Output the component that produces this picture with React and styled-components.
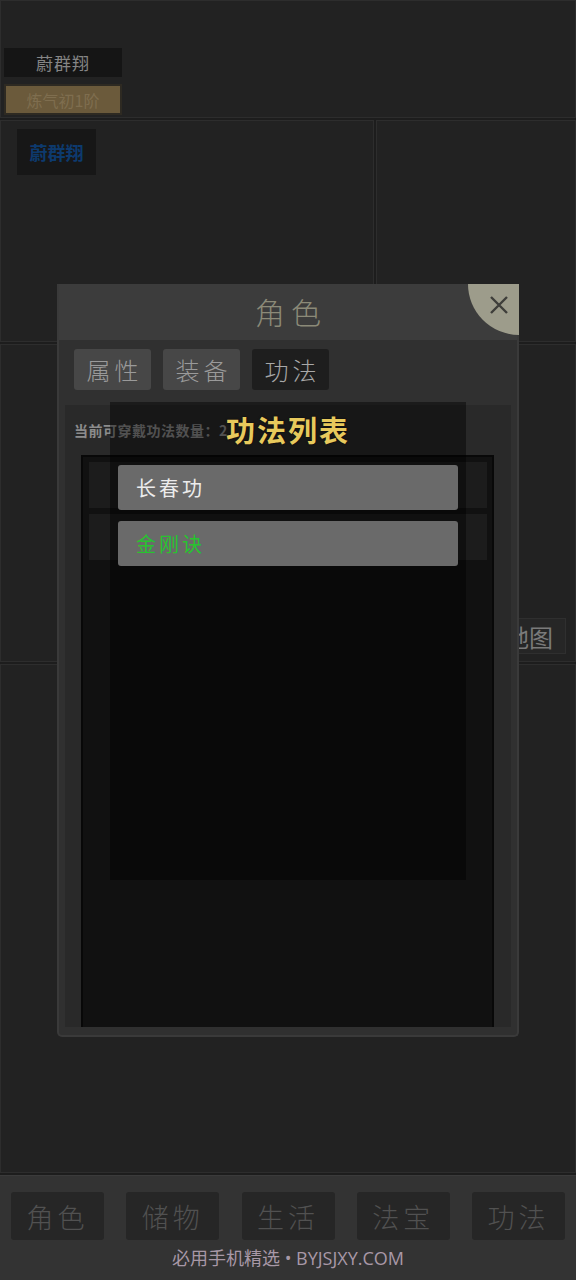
import React from 'react';
import styled, { createGlobalStyle } from 'styled-components';

const GlobalStyle = createGlobalStyle`
  html, body {
    margin: 0;
    padding: 0;
    background: #1d1d1d;
  }
  body {
    font-family: "Noto Sans CJK SC", "Noto Sans", sans-serif;
  }
  * {
    box-sizing: border-box;
  }
`;

const tabs = ['属性', '装备', '功法'];
const navItems = ['角色', '储物', '生活', '法宝', '功法'];
const skills = [
  { name: '长春功', color: '#ececec' },
  { name: '金刚诀', color: '#27c42f' },
];

const App = () => {
  return (
    <>
      <GlobalStyle />
      <Page>
        <TopPanel>
          <NameTag>蔚群翔</NameTag>
          <LevelTag>炼气初1阶</LevelTag>
        </TopPanel>
        <SplitRow>
          <Panel>
            <BlueTag>蔚群翔</BlueTag>
          </Panel>
          <Panel />
        </SplitRow>
        <MiddlePanel>
          <MapButton>地图</MapButton>
        </MiddlePanel>
        <FillPanel />
        <BottomBar>
          <NavRow>
            {navItems.map(item => (
              <NavButton key={item}>{item}</NavButton>
            ))}
          </NavRow>
          <Watermark>必用手机精选 • BYJSJXY.COM</Watermark>
        </BottomBar>

        <Modal>
          <ModalHeader>
            <ModalTitle>角色</ModalTitle>
            <CloseCorner>
              <svg width="20" height="20" viewBox="0 0 20 20">
                <path
                  d="M2 2 L18 18 M18 2 L2 18"
                  stroke="#3e3e3a"
                  strokeWidth="2.4"
                  fill="none"
                />
              </svg>
            </CloseCorner>
          </ModalHeader>
          <TabRow>
            {tabs.map(tab => (
              <Tab key={tab} active={tab === '功法'}>
                {tab}
              </Tab>
            ))}
          </TabRow>
          <Content>
            <Info>当前可穿戴功法数量：2</Info>
            <SlotList>
              <Slot />
              <Slot />
            </SlotList>
          </Content>

          <Popup>
            <PopupTitle>功法列表</PopupTitle>
            <SkillList>
              {skills.map(skill => (
                <SkillItem key={skill.name} color={skill.color}>
                  {skill.name}
                </SkillItem>
              ))}
            </SkillList>
          </Popup>
        </Modal>
      </Page>
    </>
  );
};

export default App;

const Page = styled.div`
  position: relative;
  width: 576px;
  height: 1280px;
  display: flex;
  flex-direction: column;
  gap: 2px;
  background: #1d1d1d;
  overflow: hidden;
`;

const Panel = styled.div`
  background: #222222;
  border: 1px solid #2d2d2d;
`;

const TopPanel = styled(Panel)`
  height: 118px;
  padding: 47px 0 0 3px;
  display: flex;
  flex-direction: column;
  gap: 7px;
`;

const NameTag = styled.div`
  width: 118px;
  height: 29px;
  background: #151515;
  color: #858585;
  font-size: 17px;
  display: flex;
  align-items: center;
  justify-content: center;
  letter-spacing: 1px;
`;

const LevelTag = styled.div`
  width: 118px;
  height: 31px;
  background: #6b5a3b;
  border: 2px solid #2e2a22;
  color: #7f6e4f;
  font-size: 16px;
  display: flex;
  align-items: center;
  justify-content: center;
`;

const SplitRow = styled.div`
  height: 222px;
  display: grid;
  grid-template-columns: 374px 1fr;
  gap: 2px;

  ${Panel}:first-child {
    padding: 8px 0 0 16px;
  }
`;

const BlueTag = styled.div`
  width: 79px;
  height: 46px;
  background: #171717;
  color: #0d3a6e;
  font-size: 18px;
  font-weight: 700;
  display: flex;
  align-items: center;
  justify-content: center;
`;

const MiddlePanel = styled(Panel)`
  height: 318px;
  display: flex;
  justify-content: flex-end;
  align-items: flex-end;
  padding: 0 9px 7px 0;
`;

const MapButton = styled.div`
  width: 51px;
  height: 36px;
  background: #262626;
  border: 1px solid #2f2f2f;
  color: #7a7a7a;
  font-size: 24px;
  white-space: nowrap;
  display: flex;
  align-items: center;
  justify-content: flex-end;
  padding-right: 12px;
`;

const FillPanel = styled(Panel)`
  flex: 1;
`;

const BottomBar = styled.div`
  height: 105px;
  background: #333333;
  border-top: 1px solid #3b3b3b;
  display: flex;
  flex-direction: column;
  padding: 16px 11px 0;
`;

const NavRow = styled.div`
  display: flex;
  justify-content: space-between;
`;

const NavButton = styled.div`
  width: 93px;
  height: 48px;
  background: #262626;
  border-radius: 3px;
  color: #515151;
  font-size: 27px;
  font-weight: 300;
  letter-spacing: 4px;
  display: flex;
  align-items: center;
  justify-content: center;
`;

const Watermark = styled.div`
  margin-top: 4px;
  text-align: center;
  color: #a898a7;
  font-size: 18px;
  font-family: "Open Sans", "Noto Sans CJK SC", sans-serif;
`;

const Modal = styled.div`
  position: absolute;
  left: 57px;
  top: 284px;
  width: 462px;
  height: 753px;
  background: #303030;
  border: 2px solid #3a3a3a;
  border-top: none;
  border-radius: 0 0 5px 5px;
  display: flex;
  flex-direction: column;
`;

const ModalHeader = styled.div`
  position: relative;
  height: 56px;
  background: #3c3c3c;
  display: flex;
  align-items: center;
  justify-content: center;
`;

const ModalTitle = styled.div`
  color: #8b8a78;
  font-size: 30px;
  font-weight: 300;
  letter-spacing: 6px;
  padding-left: 6px;
  margin-top: -3px;
`;

const CloseCorner = styled.div`
  position: absolute;
  top: 0;
  right: -2px;
  width: 51px;
  height: 51px;
  background: #9d9c8b;
  border-bottom-left-radius: 51px;
  display: flex;
  align-items: flex-start;
  justify-content: flex-end;
  padding: 11px 10px 0 0;
`;

const TabRow = styled.div`
  height: 65px;
  display: flex;
  gap: 12px;
  padding: 9px 15px 0;
`;

const Tab = styled.div`
  width: 77px;
  height: 41px;
  border-radius: 3px;
  background: ${p => (p.active ? '#1e1e1e' : '#474747')};
  color: ${p => (p.active ? '#a8a8a8' : '#9a9a9a')};
  font-size: 24px;
  font-weight: 300;
  letter-spacing: 4px;
  padding-left: 4px;
  display: flex;
  align-items: center;
  justify-content: center;
`;

const Content = styled.div`
  flex: 1;
  margin: 0 6px 8px;
  background: #292929;
  padding: 14px 0 0 9px;
  display: flex;
  flex-direction: column;
`;

const Info = styled.div`
  color: #8c8c8c;
  font-size: 14px;
  font-weight: 700;
  height: 22px;
  line-height: 22px;
  letter-spacing: 0.5px;
`;

const SlotList = styled.div`
  flex: 1;
  margin: 14px 17px 0 7px;
  background: #111111;
  border: 2px solid #080808;
  border-bottom: none;
  padding: 5px 5px 0 6px;
  display: flex;
  flex-direction: column;
  gap: 6px;
`;

const Slot = styled.div`
  height: 46px;
  background: #1c1c1c;
`;

const Popup = styled.div`
  position: absolute;
  left: 51px;
  top: 118px;
  width: 356px;
  height: 478px;
  background: rgba(0, 0, 0, 0.42);
  display: flex;
  flex-direction: column;
  padding: 0 8px;
`;

const PopupTitle = styled.div`
  height: 54px;
  text-align: center;
  color: #e7c95c;
  font-size: 29px;
  font-weight: 700;
  letter-spacing: 2px;
  line-height: 54px;
  text-shadow: 0 0 2px rgba(0, 0, 0, 0.8);
`;

const SkillList = styled.div`
  margin-top: 9px;
  display: flex;
  flex-direction: column;
  gap: 11px;
`;

const SkillItem = styled.div`
  height: 45px;
  background: #6a6a6a;
  border-radius: 3px;
  color: ${p => p.color};
  font-size: 20px;
  letter-spacing: 3px;
  padding-left: 18px;
  display: flex;
  align-items: center;
`;
